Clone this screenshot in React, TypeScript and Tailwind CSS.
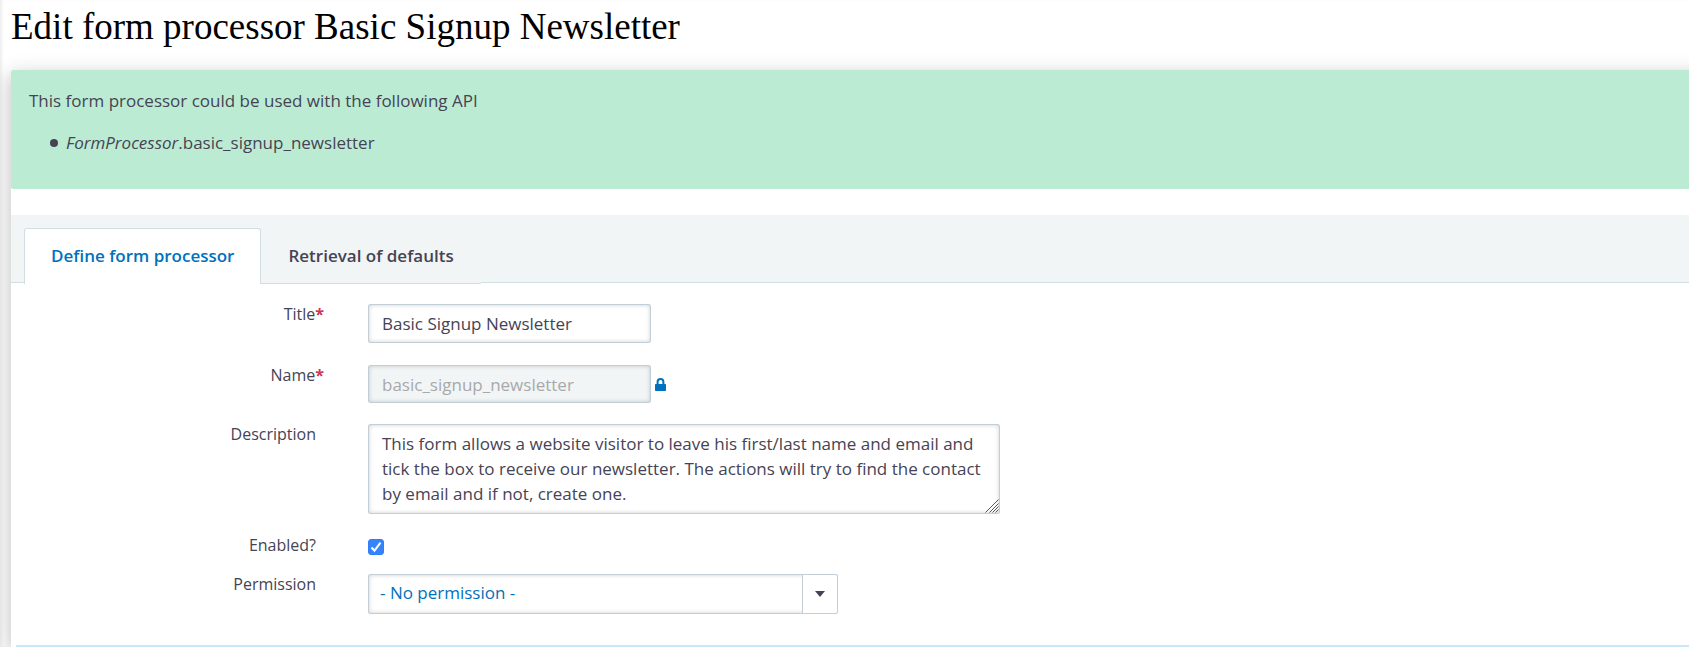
import { useState } from "react";
import type { ReactNode } from "react";

interface FieldProps {
  id: string;
  label: string;
  required?: boolean;
  className?: string;
  children: ReactNode;
}

const Field: React.FC<FieldProps> = ({
  id,
  label,
  required,
  className,
  children,
}) => {
  return (
    <div className={`flex items-start gap-[44px] ${className ?? ""}`}>
      <div className="w-[313px] shrink-0 text-right text-[16px] leading-[21px]">
        <label htmlFor={id} className={required ? "" : "pr-2"}>
          {label}
          {required && <span className="font-bold text-[#cf3458]">*</span>}
        </label>
      </div>
      {children}
    </div>
  );
};

const inputStyle =
  "rounded-[2px] border border-[#c2cfd8] px-[13px] text-[17px] shadow-[inset_0_0_4px_rgba(0,0,0,0.2)] outline-none";

const App = () => {
  const [title, setTitle] = useState("Basic Signup Newsletter");
  const [description, setDescription] = useState(
    "This form allows a website visitor to leave his first/last name and email and tick the box to receive our newsletter. The actions will try to find the contact by email and if not, create one."
  );
  const [enabled, setEnabled] = useState(true);

  return (
    <div className="flex min-h-screen flex-col overflow-hidden bg-white pl-[11px] font-['Open_Sans',sans-serif] text-[17px] text-[#464354] shadow-[inset_3px_0_3px_-1px_rgba(48,40,40,0.08)]">
      <h1 className="h-[70px] pt-1 font-['Liberation_Serif',serif] text-[37px] leading-[46px] text-black">
        Edit form processor Basic Signup Newsletter
      </h1>
      <main className="-mr-5 grow bg-white shadow-[0_3px_18px_rgba(48,40,40,0.22),-8px_8px_12px_rgba(48,40,40,0.05)]">
        <div className="h-[119px] rounded-[2px] bg-[#bbecd3] px-[18px] pt-[18px] leading-[26px]">
          <p>This form processor could be used with the following API</p>
          <ul className="mt-4 pl-[21px]">
            <li className="flex items-center gap-2">
              <span className="size-2 rounded-full bg-[#464354]" />
              <span>
                <em>FormProcessor</em>.basic_signup_newsletter
              </span>
            </li>
          </ul>
        </div>
        <nav className="mt-[26px] flex h-[68px] border-b border-[#d3dee2] bg-[#f1f5f6] pl-[13px] pt-[13px] font-semibold">
          <a
            href="#define"
            className="h-[56px] rounded-t-[3px] border border-b-0 border-[#d3dee2] bg-white px-[26px] leading-[54px] text-[#0071bd]"
          >
            Define form processor
          </a>
          <a
            href="#defaults"
            className="h-[56px] border-b border-[#d3dee2] bg-[#f1f5f6] px-[27px] leading-[56px]"
          >
            Retrieval of defaults
          </a>
        </nav>
        <form>
          <Field id="title" label="Title" required className="pt-[21px]">
            <input
              id="title"
              type="text"
              value={title}
              onChange={(e) => setTitle(e.target.value)}
              className={`${inputStyle} h-[39px] w-[283px]`}
            />
          </Field>
          <Field id="name" label="Name" required className="pt-[22px]">
            <div className="flex items-center gap-1">
              <input
                id="name"
                type="text"
                value="basic_signup_newsletter"
                disabled
                className={`${inputStyle} h-[38px] w-[283px] bg-[#f1f5f6] text-[#a9a9a9]`}
              />
              <svg viewBox="0 0 11 13" className="h-[13px] w-[11px]">
                <path
                  fill="#0071bd"
                  d="M0 6.7Q0 6 .7 6H1.6V4a3.9 3.9 0 0 1 7.8 0v2h.9q.7 0 .7.7v5.6q0 .7-.7.7H.7q-.7 0-.7-.7zM3.6 6h3.8V4a1.9 1.9 0 0 0-3.8 0z"
                />
              </svg>
            </div>
          </Field>
          <Field id="description" label="Description" className="pt-[21px]">
            <div className="relative">
              <textarea
                id="description"
                value={description}
                onChange={(e) => setDescription(e.target.value)}
                className={`${inputStyle} block h-[90px] w-[632px] resize-none overflow-hidden py-[6px] leading-[25px]`}
              />
              <svg
                viewBox="0 0 14 14"
                className="pointer-events-none absolute bottom-[1px] right-[1px] size-[14px]"
              >
                <path
                  stroke="#555"
                  strokeWidth="1"
                  fill="none"
                  d="M.5 13.5l13-13M4.5 13.5l9-9M7.5 13.5l6-6M10.5 13.5l3-3"
                />
              </svg>
            </div>
          </Field>
          <Field id="enabled" label="Enabled?" className="pt-[21px]">
            <div className="relative mt-1 size-4">
              <input
                id="enabled"
                type="checkbox"
                checked={enabled}
                onChange={(e) => setEnabled(e.target.checked)}
                className="block size-4 appearance-none rounded-[3px] border border-[#767676] checked:border-[#2f80f6] checked:bg-[#3584fb]"
              />
              {enabled && (
                <svg
                  viewBox="0 0 16 16"
                  className="pointer-events-none absolute inset-0 size-4"
                >
                  <path
                    fill="none"
                    stroke="#fff"
                    strokeWidth="2"
                    d="M3.5 8.5l3 3.2 6-8"
                  />
                </svg>
              )}
            </div>
          </Field>
          <Field id="permission" label="Permission" className="pt-[18px]">
            <div className="relative">
              <select
                id="permission"
                className="block h-[40px] w-[470px] appearance-none rounded-[2px] border border-[#c2cfd8] pb-[2px] pl-[11px] text-[17px] text-[#0071bd] shadow-[inset_0_0_4px_rgba(0,0,0,0.2)] outline-none"
              >
                <option>- No permission -</option>
              </select>
              <span className="pointer-events-none absolute inset-y-0 right-0 flex w-[36px] items-center justify-center rounded-r-[2px] border border-[#c2cfd8] bg-white">
                <svg viewBox="0 0 10 6" className="h-[6px] w-[10px]">
                  <path fill="#464354" d="M0 0h10L5 6z" />
                </svg>
              </span>
            </div>
          </Field>
          <div className="ml-[5px] mt-[31px] h-[2px] bg-[#c9e7fb]" />
        </form>
      </main>
    </div>
  );
};

export default App;
